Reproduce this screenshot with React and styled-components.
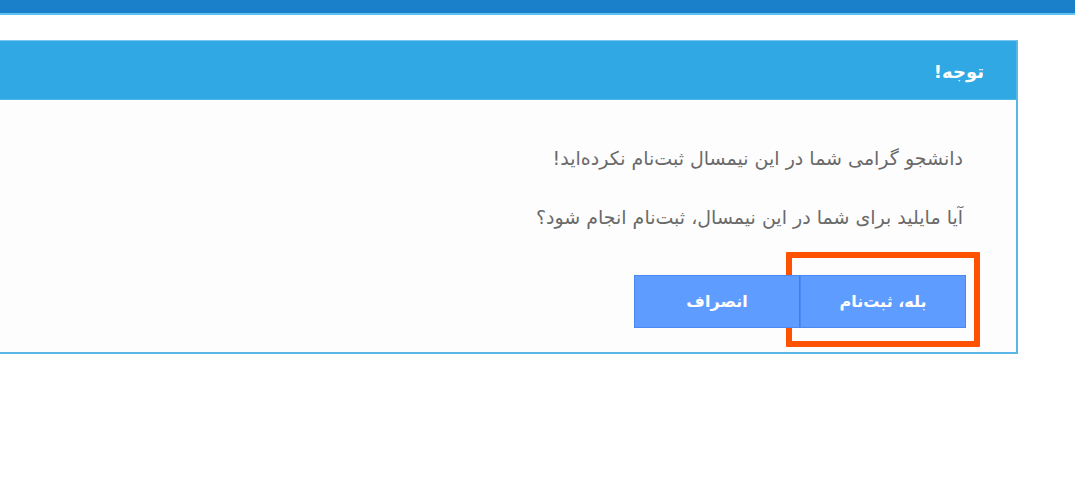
import React from "react";
import styled, { createGlobalStyle } from "styled-components";

const Global = createGlobalStyle`
  html, body {
    margin: 0;
    padding: 0;
    background: #ffffff;
  }
  body {
    font-family: "DejaVu Sans", "Noto Sans", sans-serif;
  }
`;

const Page = styled.div`
  direction: rtl;
  width: 1075px;
  height: 488px;
  overflow: hidden;
  background: #ffffff;
`;

const TopBar = styled.div`
  height: 13px;
  background: #1a80c9;
  border-bottom: 2px solid #5cc3f2;
`;

const Main = styled.div`
  padding: 25px 57px 0 0;
`;

const Panel = styled.div`
  border: 2px solid #5ab6e4;
  border-left: none;
  border-top: 1px solid #7cc8ee;
  background: #fdfdfd;
`;

const Header = styled.div`
  height: 59px;
  display: flex;
  align-items: center;
  padding: 3px 32px 0 0;
  box-sizing: border-box;
  background: #2fa8e3;
  border-bottom: 1px solid #4cb6ea;
  color: #ffffff;
  font-weight: bold;
  font-size: 18px;
`;

const Body = styled.div`
  padding: 46px 50px 24px 0;
  display: flex;
  flex-direction: column;
`;

const Message = styled.p`
  margin: 0 3px 0 0;
  height: 24px;
  line-height: 24px;
  font-size: 19px;
  color: #6a6a6a;
  & + & {
    margin-top: 35px;
  }
`;

const Actions = styled.div`
  display: flex;
  margin-top: 46px;
`;

const Button = styled.button`
  position: relative;
  width: 166px;
  height: 53px;
  border: 1px solid #4a89f2;
  background: #5f9cff;
  color: #ffffff;
  font-family: "DejaVu Sans", "Noto Sans", sans-serif;
  font-weight: bold;
  font-size: 16px;
  direction: rtl;
  padding: 0;
  cursor: pointer;
  & + & {
    border-right: 1px solid #3f7fe8;
  }
`;

const Highlight = styled.span`
  position: absolute;
  top: -24px;
  bottom: -20px;
  left: -15px;
  right: -15px;
  border: 6px solid #ff5200;
  border-radius: 1px;
  pointer-events: none;
`;

export default function App() {
  return (
    <Page>
      <Global />
      <TopBar />
      <Main>
        <Panel>
          <Header>توجه!</Header>
          <Body>
            <Message>دانشجو گرامی شما در این نیمسال ثبت‌نام نکرده‌اید!</Message>
            <Message>آیا مایلید برای شما در این نیمسال، ثبت‌نام انجام شود؟</Message>
            <Actions>
              <Button>
                بله، ثبت‌نام
                <Highlight />
              </Button>
              <Button>انصراف</Button>
            </Actions>
          </Body>
        </Panel>
      </Main>
    </Page>
  );
}
